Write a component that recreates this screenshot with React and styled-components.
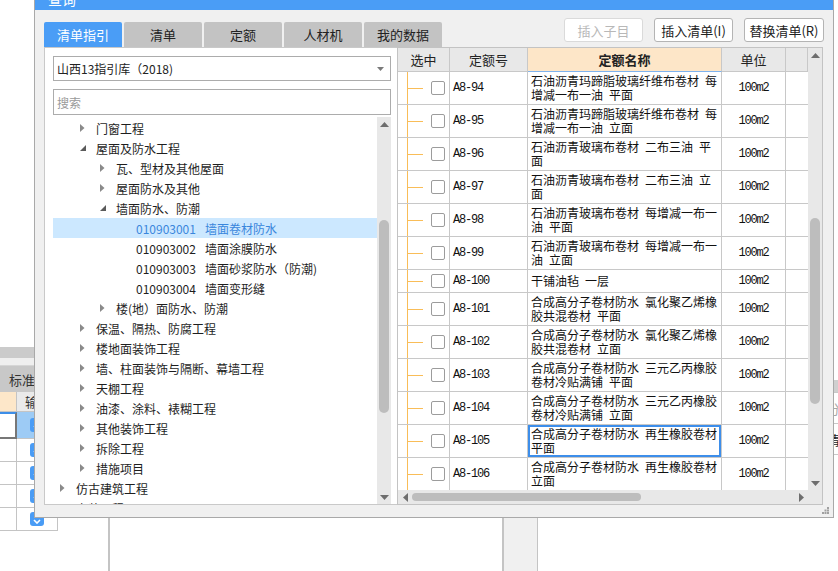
import React from 'react'
import styled, { createGlobalStyle } from 'styled-components'

const FONT = `"Noto Sans CJK SC", "Noto Sans", sans-serif`
const MONO = `"Liberation Mono", "Noto Sans CJK SC", monospace`
const ORANGE = '#f9bd58'

const GlobalStyle = createGlobalStyle`
  html, body {
    margin: 0;
    padding: 0;
    background: #fff;
    overflow: hidden;
  }
  body {
    font-family: ${FONT};
    font-size: 12px;
    color: #1e1e1e;
  }
  * {
    box-sizing: border-box;
  }
`

const Page = styled.div`
  position: relative;
  width: 838px;
  height: 571px;
  overflow: hidden;
  display: flex;
  background: #fff;
`

/* ---------- window underneath the dialog ---------- */

const BgLeft = styled.div`
  width: 110px;
  flex-shrink: 0;
  border-right: 2px solid #c4c4c4;
  padding-top: 347px;
  display: flex;
  flex-direction: column;
`

const BgBar = styled.div`
  height: ${p => p.$h}px;
  background: ${p => p.$bg};
  border-bottom: ${p => (p.$line ? '1px solid #d6d6d6' : 'none')};
`

const BgHeader = styled.div`
  height: 26px;
  background: #c8c8c8;
  display: flex;
  align-items: center;
  padding-left: 9px;
  font-size: 13px;
  color: #333;
`

const BgGrid = styled.div`
  display: grid;
  grid-template-columns: 17px 41px;
  width: 58px;
`

const BgCell = styled.div`
  height: ${p => p.$h}px;
  background: ${p => p.$bg || '#fff'};
  border-right: 1px solid #c4c4c4;
  border-bottom: 1px solid #c4c4c4;
  display: flex;
  align-items: center;
  padding-left: ${p => p.$pad || 0}px;
  font-size: 13px;
  color: #333;
  ${p => p.$focus && `
    border-right: 2px solid #777;
    border-bottom: 2px solid #777;
    border-top: 2px solid #3d8ee8;
  `}
`

const BgCheck = styled.span`
  width: 14px;
  height: 14px;
  border-radius: 3px;
  background: #4a9cf5;
  display: flex;
  align-items: flex-end;
  justify-content: center;
  padding-bottom: 2px;
`

const BgMid = styled.div`
  width: 392px;
  flex-shrink: 0;
`

const BgStrip = styled.div`
  width: 36px;
  flex-shrink: 0;
  background: #f0f0f0;
  border-left: 2px solid #c4c4c4;
  border-right: 1px solid #c4c4c4;
`

const BgRight = styled.div`
  flex: 1;
  padding-top: 380px;
  display: flex;
  flex-direction: column;
`

const BgRightRow = styled.div`
  height: ${p => p.$h}px;
  background: ${p => p.$bg || 'transparent'};
  border-bottom: 1px solid #c8c8c8;
  display: flex;
  align-items: center;
  padding-left: 289px;
  font-size: 13px;
  color: ${p => p.$color || '#222'};
`

/* ---------- dialog ---------- */

const Dialog = styled.div`
  position: absolute;
  left: 34px;
  top: -20px;
  width: 800px;
  height: 538px;
  border: 1px solid #a9a9a9;
  background: #f0f0f0;
  display: flex;
  flex-direction: column;
`

const TitleBar = styled.div`
  height: 29px;
  flex-shrink: 0;
  background: #4a9df6;
  color: #fff;
  font-size: 14px;
  padding: 6px 0 0 13px;
  display: flex;
  align-items: center;
`

const Body = styled.div`
  flex: 1;
  min-height: 0;
  padding: 8px 9px 12px 9px;
  display: flex;
  flex-direction: column;
`

const TopRow = styled.div`
  height: 29px;
  flex-shrink: 0;
  display: flex;
  justify-content: space-between;
`

const Tabs = styled.div`
  display: flex;
  gap: 2px;
  align-self: flex-end;
`

const Tab = styled.div`
  width: 78px;
  height: 25px;
  border-radius: 2px 2px 0 0;
  background: ${p => (p.$active ? '#4a9df6' : '#c3c3c3')};
  color: ${p => (p.$active ? '#fff' : '#222')};
  font-size: 13px;
  display: flex;
  align-items: center;
  justify-content: center;
`

const Buttons = styled.div`
  display: flex;
  gap: 11px;
  align-self: flex-start;
`

const Btn = styled.button`
  width: ${p => p.$w}px;
  height: 24px;
  padding: 0;
  background: #fff;
  border: 1px solid ${p => (p.disabled ? '#dadada' : '#b4b4b4')};
  border-radius: 3px;
  font-family: ${FONT};
  font-size: 13px;
  color: ${p => (p.disabled ? '#b8b8b8' : '#222')};
`

const Main = styled.div`
  flex: 1;
  min-height: 0;
  display: flex;
`

/* ---------- left panel ---------- */

const LeftPanel = styled.div`
  width: 353px;
  flex-shrink: 0;
  background: #fff;
  border: 1px solid #c9c9c9;
  border-right: none;
  padding: 8px 6px 0 8px;
  display: flex;
  flex-direction: column;
`

const Select = styled.div`
  height: 25px;
  flex-shrink: 0;
  border: 1px solid #acacac;
  display: flex;
  align-items: center;
  justify-content: space-between;
  padding: 0 6px 0 3px;
  font-size: 12px;
  color: #222;
`

const Search = styled.div`
  height: 26px;
  flex-shrink: 0;
  margin-top: 8px;
  border: 1px solid #acacac;
  display: flex;
  align-items: center;
  padding-left: 3px;
  color: #9a9a9a;
  font-size: 12px;
`

const TreeBox = styled.div`
  flex: 1;
  min-height: 0;
  margin-top: 2px;
  display: flex;
`

const TreeList = styled.div`
  flex: 1;
  padding-top: 1px;
  overflow: hidden;
`

const TreeRow = styled.div`
  height: 20px;
  display: flex;
  align-items: center;
  padding-left: ${p => 7 + (p.$level - 1) * 20}px;
  background: ${p => (p.$selected ? '#cce8ff' : 'transparent')};
  color: ${p => (p.$selected ? '#3a86dc' : '#1e1e1e')};
  font-size: 12px;
  white-space: nowrap;
`

const Toggle = styled.span`
  width: 16px;
  flex-shrink: 0;
  display: flex;
  align-items: center;
`

const Code = styled.span`
  margin-right: 9px;
`

/* ---------- scrollbars ---------- */

const VBar = styled.div`
  width: 14px;
  flex-shrink: 0;
  background: #e8e8e8;
  display: flex;
  flex-direction: column;
`

const HBar = styled.div`
  height: 14px;
  background: #e8e8e8;
  display: flex;
`

const ArrowCell = styled.div`
  width: 14px;
  height: 14px;
  flex-shrink: 0;
  display: flex;
  align-items: center;
  justify-content: center;
`

const VTrack = styled.div`
  flex: 1;
  min-height: 0;
  padding-top: ${p => p.$offset}px;
  display: flex;
  justify-content: center;
`

const HTrack = styled.div`
  flex: 1;
  padding-left: ${p => p.$offset}px;
  display: flex;
  align-items: center;
`

const VThumb = styled.div`
  width: 10px;
  height: ${p => p.$size}px;
  background: #bdbdbd;
  border-radius: 5px;
`

const HThumb = styled.div`
  width: ${p => p.$size}px;
  height: 8px;
  background: #bdbdbd;
  border-radius: 4px;
`

const Corner = styled.div`
  background: #e8e8e8;
`

const Arrow = ({ dir }) => {
  const d = {
    up: 'M0 5 L4.5 0 L9 5 Z',
    down: 'M0 0 L9 0 L4.5 5 Z',
    left: 'M5 0 L5 9 L0 4.5 Z',
    right: 'M0 0 L5 4.5 L0 9 Z',
  }[dir]
  const vertical = dir === 'up' || dir === 'down'
  return (
    <svg width={vertical ? 9 : 5} height={vertical ? 5 : 9}>
      <path d={d} fill="#6e6e6e" />
    </svg>
  )
}

const VScroll = ({ offset, size }) => (
  <VBar>
    <ArrowCell><Arrow dir="up" /></ArrowCell>
    <VTrack $offset={offset}><VThumb $size={size} /></VTrack>
    <ArrowCell><Arrow dir="down" /></ArrowCell>
  </VBar>
)

/* ---------- right table ---------- */

const RightPanel = styled.div`
  width: 426px;
  flex-shrink: 0;
  background: #fff;
  border: 1px solid #c3c3c3;
  display: grid;
  grid-template-columns: 1fr 14px;
  grid-template-rows: 1fr 14px;
  min-height: 0;
`

const Table = styled.div`
  overflow: hidden;
  min-height: 0;
`

const Row = styled.div`
  display: grid;
  grid-template-columns: 52px 78px 194px 64px 1fr;
  height: ${p => p.$h}px;
`

const HeadCell = styled.div`
  background: ${p => (p.$accent ? '#fde6c8' : '#e8e8e8')};
  border-right: 1px solid #c8c8c8;
  border-bottom: 1px solid ${p => (p.$accent ? '#7fb3ee' : '#c8c8c8')};
  display: flex;
  align-items: center;
  justify-content: center;
  font-size: 13px;
  font-weight: ${p => (p.$accent ? 700 : 400)};
  color: #222;
`

const Cell = styled.div`
  border-right: 1px solid #c8c8c8;
  border-bottom: 1px solid #c8c8c8;
  display: flex;
  align-items: center;
`

/* the orange tree guide runs through the whole column */
const SelectCell = styled(Cell)`
  padding-left: 10px;
  background: linear-gradient(${ORANGE}, ${ORANGE}) no-repeat 9px 0 / 1px calc(100% + 1px);
  overflow: visible;
`

const Tick = styled.div`
  width: 15px;
  height: 1px;
  flex-shrink: 0;
  background: ${ORANGE};
`

const Check = styled.span`
  width: 14px;
  height: 14px;
  margin-left: 8px;
  border: 1px solid #9c9c9c;
  border-radius: 2px;
  background: #fff;
`

const CodeCell = styled(Cell)`
  padding-left: 3px;
  font-family: ${MONO};
  font-size: 12px;
  letter-spacing: -1.2px;
  color: #111;
`

const NameCell = styled(Cell)`
  flex-direction: column;
  align-items: flex-start;
  justify-content: center;
  padding: 0 3px;
  line-height: 14px;
  font-size: 12px;
  color: #111;
  box-shadow: ${p => (p.$active ? 'inset 0 0 0 2px #3d8eea' : 'none')};
`

const Line = styled.span`
  white-space: nowrap;
`

const UnitCell = styled(Cell)`
  justify-content: center;
  font-family: ${MONO};
  font-size: 12px;
  letter-spacing: -1.2px;
  color: #111;
`

const BlankCell = styled(Cell)`
  border-right: none;
`

const Grip = styled.svg`
  position: absolute;
  right: 4px;
  bottom: 3px;
`

/* ---------- data ---------- */

const tree = [
  { lv: 2, st: 'c', t: '门窗工程' },
  { lv: 2, st: 'e', t: '屋面及防水工程' },
  { lv: 3, st: 'c', t: '瓦、型材及其他屋面' },
  { lv: 3, st: 'c', t: '屋面防水及其他' },
  { lv: 3, st: 'e', t: '墙面防水、防潮' },
  { lv: 4, code: '010903001', t: '墙面卷材防水', sel: true },
  { lv: 4, code: '010903002', t: '墙面涂膜防水' },
  { lv: 4, code: '010903003', t: '墙面砂浆防水（防潮)' },
  { lv: 4, code: '010903004', t: '墙面变形缝' },
  { lv: 3, st: 'c', t: '楼(地）面防水、防潮' },
  { lv: 2, st: 'c', t: '保温、隔热、防腐工程' },
  { lv: 2, st: 'c', t: '楼地面装饰工程' },
  { lv: 2, st: 'c', t: '墙、柱面装饰与隔断、幕墙工程' },
  { lv: 2, st: 'c', t: '天棚工程' },
  { lv: 2, st: 'c', t: '油漆、涂料、裱糊工程' },
  { lv: 2, st: 'c', t: '其他装饰工程' },
  { lv: 2, st: 'c', t: '拆除工程' },
  { lv: 2, st: 'c', t: '措施项目' },
  { lv: 1, st: 'c', t: '仿古建筑工程' },
  { lv: 1, st: 'c', t: '安装工程' },
]

const quotas = [
  ['A8-94', ['石油沥青玛蹄脂玻璃纤维布卷材 每', '增减一布一油 平面']],
  ['A8-95', ['石油沥青玛蹄脂玻璃纤维布卷材 每', '增减一布一油 立面']],
  ['A8-96', ['石油沥青玻璃布卷材 二布三油 平', '面']],
  ['A8-97', ['石油沥青玻璃布卷材 二布三油 立', '面']],
  ['A8-98', ['石油沥青玻璃布卷材 每增减一布一', '油 平面']],
  ['A8-99', ['石油沥青玻璃布卷材 每增减一布一', '油 立面']],
  ['A8-100', ['干铺油毡 一层']],
  ['A8-101', ['合成高分子卷材防水 氯化聚乙烯橡', '胶共混卷材 平面']],
  ['A8-102', ['合成高分子卷材防水 氯化聚乙烯橡', '胶共混卷材 立面']],
  ['A8-103', ['合成高分子卷材防水 三元乙丙橡胶', '卷材冷贴满铺 平面']],
  ['A8-104', ['合成高分子卷材防水 三元乙丙橡胶', '卷材冷贴满铺 立面']],
  ['A8-105', ['合成高分子卷材防水 再生橡胶卷材', '平面'], true],
  ['A8-106', ['合成高分子卷材防水 再生橡胶卷材', '立面']],
]

// SimSun-like half-width space
const wide = s => s.replace(/ /g, '\u2002')

const ToggleIcon = ({ st }) => {
  if (st === 'c') {
    return (
      <svg width="5" height="8">
        <path d="M0 0 L4.5 4 L0 8 Z" fill="#8a8a8a" />
      </svg>
    )
  }
  if (st === 'e') {
    return (
      <svg width="6" height="6">
        <path d="M6 0 L6 6 L0 6 Z" fill="#5a5a5a" />
      </svg>
    )
  }
  return null
}

const BgCheckMark = () => (
  <BgCheck>
    <svg width="8" height="5">
      <path d="M1 1 L4 4 L7 1" stroke="#fff" strokeWidth="1.6" fill="none" />
    </svg>
  </BgCheck>
)

export default function App() {
  return (
    <Page>
      <GlobalStyle />

      <BgLeft>
        <BgBar $h={11} $bg="#cbcbcb" />
        <BgBar $h={8} $bg="#efefef" $line />
        <BgHeader>标准</BgHeader>
        <BgGrid>
          <BgCell $h={20} $bg="#fde7c9" />
          <BgCell $h={20} $bg="#eaeaea" $pad={8}>输</BgCell>
          <BgCell $h={27} $focus />
          <BgCell $h={27} $bg="#9dcbf5" $pad={13}><BgCheckMark /></BgCell>
          {[0, 1, 2, 3].map(i => (
            <React.Fragment key={i}>
              <BgCell $h={23} />
              <BgCell $h={23} $pad={13}><BgCheckMark /></BgCell>
            </React.Fragment>
          ))}
        </BgGrid>
      </BgLeft>
      <BgMid />
      <BgStrip />
      <BgRight>
        <BgRightRow $h={13} $bg="#cfcfcf" />
        <BgRightRow $h={31} $color="#a8a8a8">分</BgRightRow>
        <BgRightRow $h={31}>清</BgRightRow>
      </BgRight>

      <Dialog>
        <TitleBar>查询</TitleBar>
        <Body>
          <TopRow>
            <Tabs>
              <Tab $active>清单指引</Tab>
              <Tab>清单</Tab>
              <Tab>定额</Tab>
              <Tab>人材机</Tab>
              <Tab>我的数据</Tab>
            </Tabs>
            <Buttons>
              <Btn $w={79} disabled>插入子目</Btn>
              <Btn $w={79}>插入清单(I)</Btn>
              <Btn $w={80}>替换清单(R)</Btn>
            </Buttons>
          </TopRow>

          <Main>
            <LeftPanel>
              <Select>
                <span>山西13指引库（2018)</span>
                <svg width="7" height="4">
                  <path d="M0 0 L7 0 L3.5 4 Z" fill="#7a7a7a" />
                </svg>
              </Select>
              <Search>搜索</Search>
              <TreeBox>
                <TreeList>
                  {tree.map((n, i) => (
                    <TreeRow key={i} $level={n.lv} $selected={n.sel}>
                      <Toggle><ToggleIcon st={n.st} /></Toggle>
                      {n.code && <Code>{n.code}</Code>}
                      {n.t}
                    </TreeRow>
                  ))}
                </TreeList>
                <VScroll offset={89} size={193} />
              </TreeBox>
            </LeftPanel>

            <RightPanel>
              <Table>
                <Row $h={24}>
                  <HeadCell>选中</HeadCell>
                  <HeadCell>定额号</HeadCell>
                  <HeadCell $accent>定额名称</HeadCell>
                  <HeadCell>单位</HeadCell>
                  <HeadCell />
                </Row>
                {quotas.map(([code, lines, active]) => (
                  <Row key={code} $h={lines.length > 1 ? 33 : 23}>
                    <SelectCell>
                      <Tick />
                      <Check />
                    </SelectCell>
                    <CodeCell>{code}</CodeCell>
                    <NameCell $active={active}>
                      {lines.map((l, i) => <Line key={i}>{wide(l)}</Line>)}
                    </NameCell>
                    <UnitCell>100m2</UnitCell>
                    <BlankCell />
                  </Row>
                ))}
              </Table>
              <VScroll offset={156} size={186} />
              <HBar>
                <ArrowCell><Arrow dir="left" /></ArrowCell>
                <HTrack $offset={0}><HThumb $size={229} /></HTrack>
                <ArrowCell><Arrow dir="right" /></ArrowCell>
              </HBar>
              <Corner />
            </RightPanel>
          </Main>
        </Body>
        <Grip width="7" height="7">
          <rect x="5" y="0" width="2" height="2" fill="#a0a0a0" />
          <rect x="2.5" y="2.5" width="2" height="2" fill="#a0a0a0" />
          <rect x="5" y="2.5" width="2" height="2" fill="#a0a0a0" />
          <rect x="0" y="5" width="2" height="2" fill="#a0a0a0" />
          <rect x="2.5" y="5" width="2" height="2" fill="#a0a0a0" />
          <rect x="5" y="5" width="2" height="2" fill="#a0a0a0" />
        </Grip>
      </Dialog>
    </Page>
  )
}
